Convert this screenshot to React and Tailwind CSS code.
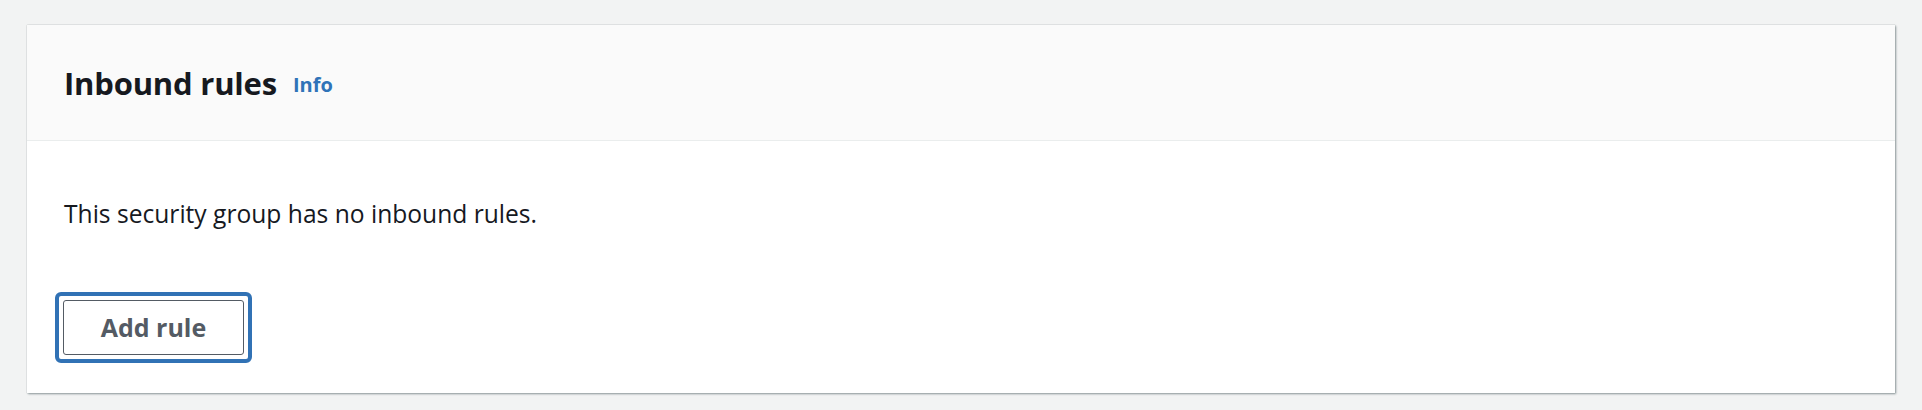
export default function App() {
  return (
    <div className="min-h-screen bg-[#f2f3f3] pt-[25px] pl-[27px] pr-[27px] pb-[18px]" style={{ fontFamily: '"Open Sans", "Noto Sans", Arial, sans-serif' }}>
      <div className="bg-white shadow-[1px_1px_2px_rgba(0,28,36,0.4),0_0_1px_rgba(0,28,36,0.3)]">
        {/* Header */}
        <div className="h-[116px] flex items-center px-[37px] bg-[#fafafa] border-b border-[#eaeded]">
          <h2 className="text-[31px] font-bold text-[#16191f] tracking-[-0.2px] leading-[40px]">Inbound rules</h2>
          <a href="#" className="ml-[16px] mt-[5px] text-[20px] font-bold text-[#2f73b8] leading-[28px]">Info</a>
        </div>

        {/* Body */}
        <div className="px-[28px] pt-[57px] pb-[30px]">
          <p className="pl-[9px] text-[24.6px] text-[#16191f] leading-[32px]">
            This security group has no inbound rules.
          </p>
          <div className="mt-[62px] inline-block rounded-[6px] border-[4px] border-[#3172b5] p-[4px]">
            <button className="flex items-center justify-center w-[181px] h-[55px] rounded-[3px] border border-[#545b64] bg-white text-[25px] font-bold text-[#545b64]">
              Add rule
            </button>
          </div>
        </div>
      </div>
    </div>
  );
}
